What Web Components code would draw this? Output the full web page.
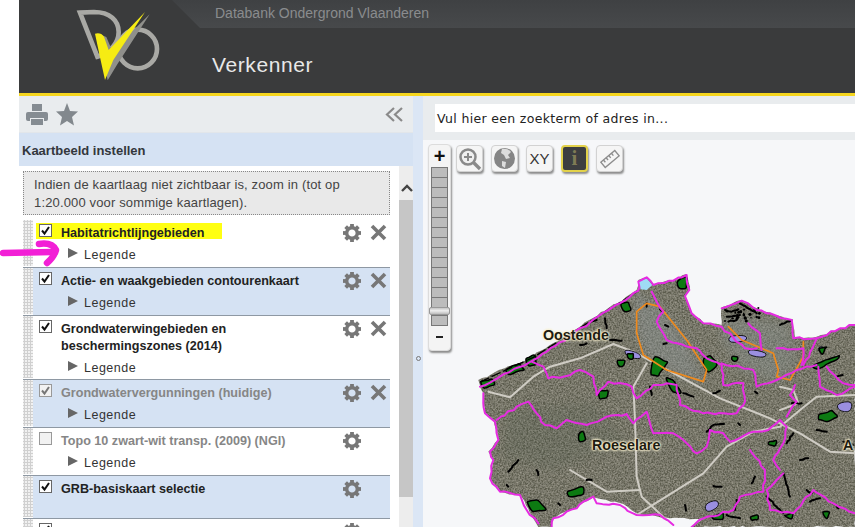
<!DOCTYPE html>
<html lang="nl">
<head>
<meta charset="utf-8">
<title>Verkenner</title>
<style>
  html, body { margin: 0; height: 100%; overflow: hidden; background: #fff; }
  body { font-family: "Liberation Sans", Arial, sans-serif; }
  do-app { display: block; height: 527px; }
</style>
</head>
<body>
<do-app></do-app>

<script>
// small helper, every element just sets its shadow html
function shadow(el, html) {
  el.attachShadow({ mode: 'open' });
  el.shadowRoot.innerHTML = html;
}

class DoApp extends HTMLElement {
  connectedCallback() {
    shadow(this, `
      <style>
        :host { display: block; height: 527px; padding-left: 19px; box-sizing: border-box; overflow: hidden; }
        .main { display: grid; grid-template-columns: 394px 10px 1fr; height: 431px; }
        .split { background: #dbe6f5; position: relative; }
        .split i { position: absolute; left: 3px; top: 260px; width: 3px; height: 3px; border: 1px solid #777; border-radius: 50%; }
      </style>
      <do-header></do-header>
      <div class="main">
        <layer-panel></layer-panel>
        <div class="split"><i></i></div>
        <map-view></map-view>
      </div>
    `);
  }
}

class DoHeader extends HTMLElement {
  connectedCallback() {
    shadow(this, `
      <style>
        :host { display: block; height: 96px; box-sizing: border-box; background: #3a3b3c; border-bottom: 3px solid #f6d61e; position: relative; overflow: hidden; }
        .tab { position: absolute; left: 153px; top: 0; right: 0; height: 28px; background: linear-gradient(#3f4143, #47494b); clip-path: polygon(0 0, 100% 0, 100% 100%, 28px 100%); }
        .site { position: absolute; left: 196px; top: 5px; font-size: 14px; line-height: 16px; color: #8a8c8e; }
        .app { position: absolute; left: 193px; top: 52px; font-size: 21px; line-height: 26px; color: #e8e8e8; letter-spacing: .6px; }
        svg { position: absolute; left: 41px; top: 0; }
      </style>
      <div class="tab"></div>
      <svg width="120" height="90" viewBox="0 0 360 270">
        <g fill="none" stroke="#a9a9a5" stroke-width="14">
          <path d="M60 38 L102 36 C150 36 176 62 176 96 C176 130 150 158 112 170 Z"/>
          <circle cx="233" cy="147" r="58"/>
        </g>
        <path d="M112 100 L132 108 L150 150 L262 40 L165 190 L136 238 L122 170 Z" fill="#8f8f8b" transform="translate(7 3)"/>
        <path d="M105 101 Q122 96 132 110 L146 150 L255 36 L160 180 L135 240 L120 172 Z" fill="#f6ec13"/>
      </svg>
      <div class="site">Databank Ondergrond Vlaanderen</div>
      <div class="app">Verkenner</div>
    `);
  }
}

class LayerPanel extends HTMLElement {
  connectedCallback() {
    shadow(this, `
      <style>
        :host { display: flex; flex-direction: column; height: 431px; overflow: hidden; background: #fff; }
        .tools { flex: 0 0 37px; background: #e9ecee; border-bottom: 1px solid #e2e6ea; box-sizing: border-box; display: flex; align-items: center; padding: 0 10px 0 7px; gap: 8px; }
        .tools .sp { flex: 1; }
        h2 { flex: 0 0 33px; margin: 0; background: #d5e2f3; font-size: 13px; line-height: 36px; font-weight: bold; color: #33373c; padding-left: 3px; height: 33px; }
        .body { flex: 1; display: grid; grid-template-columns: 380px 15px; min-height: 0; }
        .list { padding: 5px 9px 0 4px; overflow: hidden; }
        .info { box-sizing: border-box; height: 44px; border: 1px dotted #888; background: #e9e9e9; padding: 4px 10px; font-size: 13px; line-height: 18px; color: #444; letter-spacing: .15px; margin-bottom: 5px; }
        .bar { background: #ededed; display: flex; flex-direction: column; }
        .bar .up { height: 34px; display: flex; justify-content: center; align-items: flex-end; padding-bottom: 8px; box-sizing: border-box; }
        .bar .thumb { height: 297px; background: #c6c6c6; }
      </style>
      <div class="tools">
        <svg width="22" height="21" viewBox="0 0 22 21" fill="#858c92">
          <rect x="6" y="0" width="10" height="7"/>
          <rect x="0" y="8" width="22" height="9" rx="2"/>
          <rect x="4" y="14" width="14" height="7" fill="#e9ecee"/>
          <rect x="5" y="15" width="12" height="6"/>
        </svg>
        <svg width="22" height="23" viewBox="0 0 22 23"><polygon fill="#82888d" points="11,0 14,8 22,8.5 16,14 18,22.5 11,18 4,22.5 6,14 0,8.5 8,8"/></svg>
        <span class="sp"></span>
        <svg width="18" height="15" viewBox="0 0 18 15" fill="none" stroke="#8a8a8a" stroke-width="2.2"><path d="M9 1 L2 7.5 L9 14 M17 1 L10 7.5 L17 14"/></svg>
      </div>
      <h2>Kaartbeeld instellen</h2>
      <div class="body">
        <div class="list">
          <div class="info">Indien de kaartlaag niet zichtbaar is, zoom in (tot op 1:20.000 voor sommige kaartlagen).</div>
          <layer-item checked mark remove>Habitatrichtlijngebieden</layer-item>
          <layer-item checked alt remove>Actie- en waakgebieden contourenkaart</layer-item>
          <layer-item checked remove tight>Grondwaterwingebieden en<br>beschermingszones (2014)</layer-item>
          <layer-item checked dim alt remove>Grondwatervergunningen (huidige)</layer-item>
          <layer-item dim>Topo 10 zwart-wit transp. (2009) (NGI)</layer-item>
          <layer-item checked alt nolegend>GRB-basiskaart selectie</layer-item>
          <layer-item checked nolegend></layer-item>
        </div>
        <div class="bar">
          <div class="up"><svg width="12" height="8" viewBox="0 0 12 8" fill="none" stroke="#444" stroke-width="2.4"><path d="M1 7 L6 2 L11 7"/></svg></div>
          <div class="thumb"></div>
        </div>
      </div>
      <svg style="position:absolute;left:0;top:236px" width="62" height="32" viewBox="0 0 62 32" fill="none" stroke="#f21fd6" stroke-width="6.5" stroke-linecap="round" stroke-linejoin="round">
        <path d="M3 17 L52 16"/><path d="M39 8 Q52 6 56 14 Q54 21 47 27"/>
      </svg>
    `);
  }
}

class LayerItem extends HTMLElement {
  connectedCallback() {
    const gear = `<svg width="18" height="18" viewBox="-9 -9 18 18" fill="#777"><circle r="5.3" fill="none" stroke="#777" stroke-width="3.4"/>${
      [0, 45, 90, 135, 180, 225, 270, 315].map(a => `<rect x="-1.9" y="-9" width="3.8" height="4" transform="rotate(${a})"/>`).join('')}</svg>`;
    const cross = `<svg width="17" height="17" viewBox="0 0 17 17" stroke="#777" stroke-width="3.6"><path d="M2 2 L15 15 M15 2 L2 15"/></svg>`;
    const tick = this.hasAttribute('checked')
      ? `<svg width="13" height="13" viewBox="0 0 13 13" fill="none" stroke="currentColor" stroke-width="2"><path d="M3 6.5 L5.5 9.5 L10 3"/></svg>` : '';
    const legend = this.hasAttribute('nolegend') ? '' : `<div class="legend"><span class="tri"></span>Legende</div>`;
    shadow(this, `
      <style>
        :host { display: grid; grid-template-columns: 10px 1fr; border-bottom: 1px solid #8e98a3; position: relative; }
        .grip { background-color: #f1f1f1; background-image: radial-gradient(#d0d0d0 1px, transparent 1.2px); background-size: 3px 3px; margin-bottom: 1px; }
        .row { display: flex; padding: 4px 4px 4px 6px; min-height: 39px; }
        :host([alt]) .row { background: #d5e2f3; }
        :host([nolegend]) .row { min-height: 34px; }
        :host([tight]) .row { padding-bottom: 3px; }
        .box { flex: 0 0 13px; height: 13px; box-sizing: border-box; border: 1px solid #666; background: #fff; color: #111; display: block; }
        .box svg { display: block; margin: -1px; }
        :host([dim]) .box { border-color: #999; color: #777; background: #f2f2f2; }
        .main { flex: 1; margin-left: 9px; font-size: 12.6px; }
        .title { font-weight: bold; line-height: 17px; color: #222; padding-top: 1px; }
        :host([dim]) .title { color: #868686; }
        .legend { display: flex; align-items: center; font-size: 12.5px; line-height: 16px; color: #333; margin-top: 5px; letter-spacing: .5px; padding-left: 7px; }
        .tri { width: 0; height: 0; border-left: 10px solid #666; border-top: 5.5px solid transparent; border-bottom: 5.5px solid transparent; margin: -4px 6px 0 0; }
        .acts { display: flex; gap: 9px; flex: 0 0 44px; align-items: flex-start; margin-left: 3px; transform: translateX(1px); }
        .mark { position: absolute; left: 13px; top: 3px; width: 186px; height: 16px; background: #ffff12; }
        .box, .main, .acts { position: relative; }
      </style>
      <div class="grip"></div>
      <div class="row">
        ${this.hasAttribute('mark') ? '<div class="mark"></div>' : ''}
        <span class="box">${tick}</span>
        <div class="main">
          <div class="title"><slot></slot></div>
          ${legend}
        </div>
        <div class="acts">${gear}${this.hasAttribute('remove') ? cross : ''}</div>
      </div>
    `);
  }
}

class ToolButton extends HTMLElement {
  connectedCallback() {
    shadow(this, `
      <style>
        :host { display: flex; align-items: center; justify-content: center; width: 27px; height: 27px; box-sizing: border-box; border: 1px solid #d2d2d2; border-radius: 4px; background: #f5f5f5; box-shadow: 1px 2px 2px #8d8d8d; color: #333; font-size: 15px; font-family: "Liberation Sans", Arial, sans-serif; }
        :host([active]) { background: #3d3e40; border: 2px solid #e3d24a; color: #7f7b55; font: bold 21px "Liberation Serif", serif; }
      </style>
      <slot></slot>
    `);
  }
}

class ZoomSlider extends HTMLElement {
  connectedCallback() {
    const ticks = Array(14).fill('<i></i>').join('');
    shadow(this, `
      <style>
        :host { display: flex; flex-direction: column; align-items: center; width: 23px; height: 207px; box-sizing: border-box; background: #f4f4f4; border: 1px solid #dcdcdc; border-radius: 4px; box-shadow: 1px 2px 2px #8d8d8d; }
        b { height: 22px; font: bold 20px/22px "Liberation Sans", Arial, sans-serif; color: #111; }
        i { display: block; box-sizing: border-box; width: 17px; height: 10px; background: #bcbcbc; border: 1px solid #777; border-bottom-width: 0; }
        .knob { width: 21px; height: 8px; box-sizing: border-box; background: linear-gradient(#c4c4c4, #eee 45%, #bbb); border: 1px solid #999; border-radius: 2px; }
        .last { height: 11px; border-bottom-width: 1px; }
        .minus { margin-top: 10px; width: 7px; height: 2px; background: #222; }
      </style>
      <b>+</b>${ticks}<div class="knob"></div><i class="last"></i><div class="minus"></div>
    `);
  }
}

// seeded, so the map stays the same on each load
let seed = 7;
const rnd = () => (seed = (seed * 16807) % 2147483647) / 2147483647;

function parsePts(s) {
  return s.split(' ').map(p => p.split(',').map(Number));
}

// breaks each segment up and shifts the points a bit, gives the jagged border look
function wiggle(s, step, amp) {
  const pts = parsePts(s);
  const out = [pts[0]];
  for (let i = 1; i < pts.length; i++) {
    const [x0, y0] = pts[i - 1], [x1, y1] = pts[i];
    const n = Math.max(1, Math.round(Math.hypot(x1 - x0, y1 - y0) / step));
    for (let k = 1; k <= n; k++) {
      const j = k === n ? 0 : amp;
      out.push([x0 + (x1 - x0) * k / n + (rnd() - .5) * 2 * j, y0 + (y1 - y0) * k / n + (rnd() - .5) * 2 * j]);
    }
  }
  return out.map(p => p[0].toFixed(1) + ',' + p[1].toFixed(1)).join(' ');
}

// closed rounded shape through the midpoints
function smooth(s) {
  const p = parsePts(s);
  const mid = (a, b) => ((a[0] + b[0]) / 2).toFixed(1) + ' ' + ((a[1] + b[1]) / 2).toFixed(1);
  let d = 'M' + mid(p[p.length - 1], p[0]);
  p.forEach((a, i) => { d += ' Q' + a[0] + ' ' + a[1] + ' ' + mid(a, p[(i + 1) % p.length]); });
  return d + 'Z';
}

class MapView extends HTMLElement {
  connectedCallback() {
    const line = (pts, c, w) => `<polyline points="${pts}" fill="none" stroke="${c}" stroke-width="${w}" stroke-linejoin="round" stroke-linecap="round"/>`;
    const blob = (pts, c, w) => `<path d="${smooth(pts)}" fill="${c}" stroke="#000" stroke-width="${w}" stroke-linejoin="round"/>`;
    const land = '175,330 340,258 650,60 655,30 680,22 700,42 760,30 800,12 810,60 795,75 815,130 850,160 905,165 905,112 965,90 1010,115 1060,135 1115,150 1125,205 1190,200 1260,175 1305,165 1305,771 815,771 850,745 750,745 650,730 610,702 520,682 470,712 400,745 395,771 355,771 330,730 305,680 240,665 210,625 220,570 205,545 235,510 220,450 195,430 190,370 175,330';
    const magenta = [
      '180,350 340,270 655,62 655,35 680,22 700,45 760,32 800,15 808,60 795,78 815,130 850,160 905,170 975,235 1010,235',
      '190,370 195,430 225,455 235,510 210,545 220,570 210,625 240,665 300,675 320,720 355,760',
      '395,771 400,745 470,715 490,695 520,680 530,700 600,705 650,735 720,735 760,765',
      '230,450 290,410 325,395 350,430 375,465 410,475 440,450 500,465 560,440 620,432 640,460 680,425 700,490 760,490 800,520 830,550 860,530 870,480 910,490 930,515 1000,485 1045,480 1080,450 1100,470 1090,520 1060,570 1080,600',
      '335,275 370,290 385,325 430,320 480,300 520,320 530,375 565,335 635,350 650,385 700,345 740,340 770,345 780,405 850,430 950,430 975,395 970,340 910,345 905,285 860,265 830,235 740,210 710,155 730,125 695,65',
      '905,280 1000,300 1010,350 1070,330 1130,300 1190,285',
      '1150,285 1190,205 1260,175 1305,165',
      '905,115 965,92 1010,120 1115,150 1120,205 1190,205',
      '985,160 1020,190 1025,240',
      '1070,235 1150,235 1145,285',
      '1125,345 1110,375 1130,395 1100,440',
      '990,540 1035,600 1030,665 960,680 940,720 850,745 815,771',
      '1090,610 1040,660 1050,720 1120,730 1180,660 1240,700 1305,730',
      '1195,290 1200,350 1250,375 1305,350',
      '1220,290 1270,340 1305,345'
    ];
    const roads = [
      '205,365 270,382 340,320 390,290 480,265 580,222 640,245 780,320 900,385 1050,445 1140,490 1230,545 1305,550',
      '680,280 640,350 645,450 650,620 665,680 740,750',
      '450,600 560,665 660,660',
      '650,735 850,610 920,530 1000,485 1080,470 1140,420 1190,380 1305,375',
      '1080,420 1135,400 1120,360 1080,350'
    ];
    const orange = [
      '720,110 680,100 650,125 650,190 670,255 740,300 850,335 860,300 800,210 720,110',
      '925,170 965,210 1060,250 1075,300 1070,320 1110,330 1150,260 1150,215'
    ];
    const purple = ['610,236 660,250 664,268 622,262', '925,198 978,195 982,212 928,220', '985,236 1042,248 1034,264 985,256', '1250,400 1298,392 1292,428 1255,422', '853,702 892,688 898,710 860,730', '1195,232 1210,228 1210,245 1195,245'];
    const green = [
      '180,335 215,325 225,345 190,355', '255,300 300,280 315,300 265,315', '315,265 345,255 350,285 325,290',
      '600,100 625,95 635,120 610,125', '770,35 800,20 800,55 775,55', '590,270 615,270 610,290 595,290',
      '620,250 640,250 640,268 625,268', '535,365 565,360 560,385 538,388', '475,490 490,482 498,510 476,515',
      '850,265 870,255 892,285 865,308 850,290', '700,260 745,275 715,320 690,315', '735,320 760,330 785,370 755,365',
      '935,258 955,262 950,275 935,272', '1195,235 1222,230 1205,255', '1175,290 1260,255 1250,270 1190,298',
      '1195,435 1235,420 1255,440 1225,455 1195,450', '1045,515 1070,510 1065,530 1045,525', '320,695 355,690 380,720 335,725',
      '440,665 490,650 490,675 445,680', '1205,725 1230,725 1220,750', '875,740 910,730 910,748 880,748', '1090,735 1120,730 1115,750',
      '990,740 1015,733 1015,750 995,752'
    ];
    const squiggle = [
      '915,120 935,125 955,118', '920,140 960,135', '925,155 950,150', '960,100 1010,130', '1080,165 1115,150', '680,100 680,110', '720,118 725,122', '735,165 745,170',
      '730,222 740,220', '860,485 880,465 912,462', '955,460 960,465', '1115,400 1145,400', '1190,480 1220,485', '1140,570 1165,565',
      '1090,610 1110,680', '1160,660 1175,670', '1170,695 1200,685', '265,605 295,570', '350,600 355,615', '260,645 265,650', '500,630 515,630',
      '795,705 798,722', '995,640 1005,620', '950,690 945,720', '1040,680 1090,730', '920,735 960,745', '880,648 905,650',
      '515,155 530,150', '555,145 560,175', '480,225 500,220', '570,210 605,212', '880,370 900,362', '690,350 695,375', '790,370 820,380',
      '1005,365 1012,370', '1100,520 1120,490', '1270,515 1300,525', '1250,320 1268,315', '415,700 420,705', '1250,710 1255,715'
    ];
    // the little black specks in the north east corner
    let specks = '';
    for (let i = 0; i < 26; i++) {
      specks += `<circle cx="${(915 + rnd() * 110).toFixed(0)}" cy="${(112 + rnd() * 45).toFixed(0)}" r="${(2 + rnd() * 3).toFixed(1)}"/>`;
    }
    shadow(this, `
      <style>
        :host { display: block; position: relative; height: 431px; background: #f6f7f9; overflow: hidden; }
        .search { height: 44px; box-sizing: border-box; background: #e9ecee; padding: 8px 0 8px 12px; }
        .field { height: 28px; background: #fff; font: 12.5px/29px "DejaVu Sans", sans-serif; color: #222; padding-left: 2px; letter-spacing: .33px; }
        svg.map { position: absolute; left: 0; top: 174px; }
        .tools { position: absolute; left: 5px; top: 48px; display: flex; align-items: flex-start; }
        .btns { display: flex; gap: 8px; margin-left: 5px; margin-top: 1px; }
        .lab { position: absolute; font-weight: bold; font-size: 14.3px; line-height: 16px; color: #1d1b10; text-shadow: 0 0 2px #f7efcf, 0 0 2px #f7efcf, 0 0 3px #f7efcf, 0 0 3px #f7efcf; }
      </style>
      <div class="search"><div class="field">Vul hier een zoekterm of adres in...</div></div>
      <svg class="map" width="432" height="257" viewBox="9 0 1296 771">
        <defs>
          <filter id="grain" x="0" y="0" width="100%" height="100%">
            <feTurbulence type="fractalNoise" baseFrequency=".2" numOctaves="3" seed="4" result="n"/>
            <feColorMatrix in="n" type="matrix" values="0 0 0 0 .52  0 0 0 0 .5  0 0 0 0 .42  .7 .7 0 0 -.5" result="c"/>
            <feComposite in="c" in2="SourceAlpha" operator="in" result="t"/>
            <feMerge><feMergeNode in="SourceGraphic"/><feMergeNode in="t"/></feMerge>
          </filter>
          <filter id="soft"><feGaussianBlur stdDeviation="14"/></filter>
          <clipPath id="landclip"><polygon points="${land}"/></clipPath>
        </defs>
        <polygon points="${wiggle(land, 14, 3)}" fill="#5c5b4e" filter="url(#grain)"/>
        <g clip-path="url(#landclip)">
          <polygon points="640,60 720,110 800,210 850,335 780,320 680,260 650,190" fill="#8f989c" opacity=".4" filter="url(#soft)"/>
          <polygon points="915,130 1110,160 1130,290 1060,340 960,300 900,200" fill="#8b9494" opacity=".35" filter="url(#soft)"/>
          <polygon points="260,420 520,400 620,520 400,600 250,560" fill="#4d5a4c" opacity=".2" filter="url(#soft)"/>
        </g>
        <polygon points="655,35 680,25 697,45 680,60 662,58" fill="#9fdcf4"/>
        ${roads.map(r => line(r, '#cfccc4', 6)).join('')}
        ${purple.map(p => blob(p, '#9a8fe0', 2.5)).join('')}
        ${green.map(g => blob(wiggle(g, 12, 3), '#0d7a12', 4.5)).join('')}
        ${squiggle.map(s => line(wiggle(s, 8, 2), '#000', 6)).join('')}
        <g fill="#000">${specks}</g>
        ${line('180,336 340,262 650,66', '#000', 4).replace('stroke-linecap="round"', 'stroke-dasharray="30 8"')}
        ${orange.map(o => line(o, '#ef8a1d', 5)).join('')}
        ${magenta.map(m => line(wiggle(m, 16, 3.5), '#e62be2', 6)).join('')}
      </svg>
      <span class="lab" style="left:120px;top:231px">Oostende</span>
      <span class="lab" style="left:169px;top:341px">Roeselare</span>
      <span class="lab" style="left:420px;top:341px">A</span>
      <div class="tools">
        <zoom-slider></zoom-slider>
        <div class="btns">
          <tool-button>
            <svg width="24" height="24" viewBox="0 0 24 24" fill="none" stroke="#8a8a8a"><circle cx="10" cy="10" r="7.5" stroke-width="2.5" fill="#f0f0f0"/><path d="M6 10 H14 M10 6 V14" stroke-width="2"/><path d="M15.5 15.5 L22 22" stroke-width="3.4"/></svg>
          </tool-button>
          <tool-button>
            <svg width="23" height="23" viewBox="0 0 23 23"><circle cx="11.5" cy="11.5" r="10.5" fill="#858585"/><path d="M9 2 Q15 1 18 5 L15 8 L17 11 L13 12 L11 8 L8 6 Z M9 14 L13 15 L12 21 L9 19 Z" fill="#dcdcdc"/></svg>
          </tool-button>
          <tool-button>XY</tool-button>
          <tool-button active>i</tool-button>
          <tool-button>
            <svg width="20" height="20" viewBox="0 0 23 23" fill="none" stroke="#8d8d8d" stroke-width="1.6"><g transform="rotate(-40 11.5 11.5)"><rect x="1" y="7.5" width="21" height="8"/><path d="M5 7.5 V11 M9 7.5 V11 M13 7.5 V11 M17 7.5 V11"/></g></svg>
          </tool-button>
        </div>
      </div>
    `);
  }
}

customElements.define('do-app', DoApp);
customElements.define('do-header', DoHeader);
customElements.define('layer-panel', LayerPanel);
customElements.define('layer-item', LayerItem);
customElements.define('tool-button', ToolButton);
customElements.define('zoom-slider', ZoomSlider);
customElements.define('map-view', MapView);
</script>
</body>
</html>
